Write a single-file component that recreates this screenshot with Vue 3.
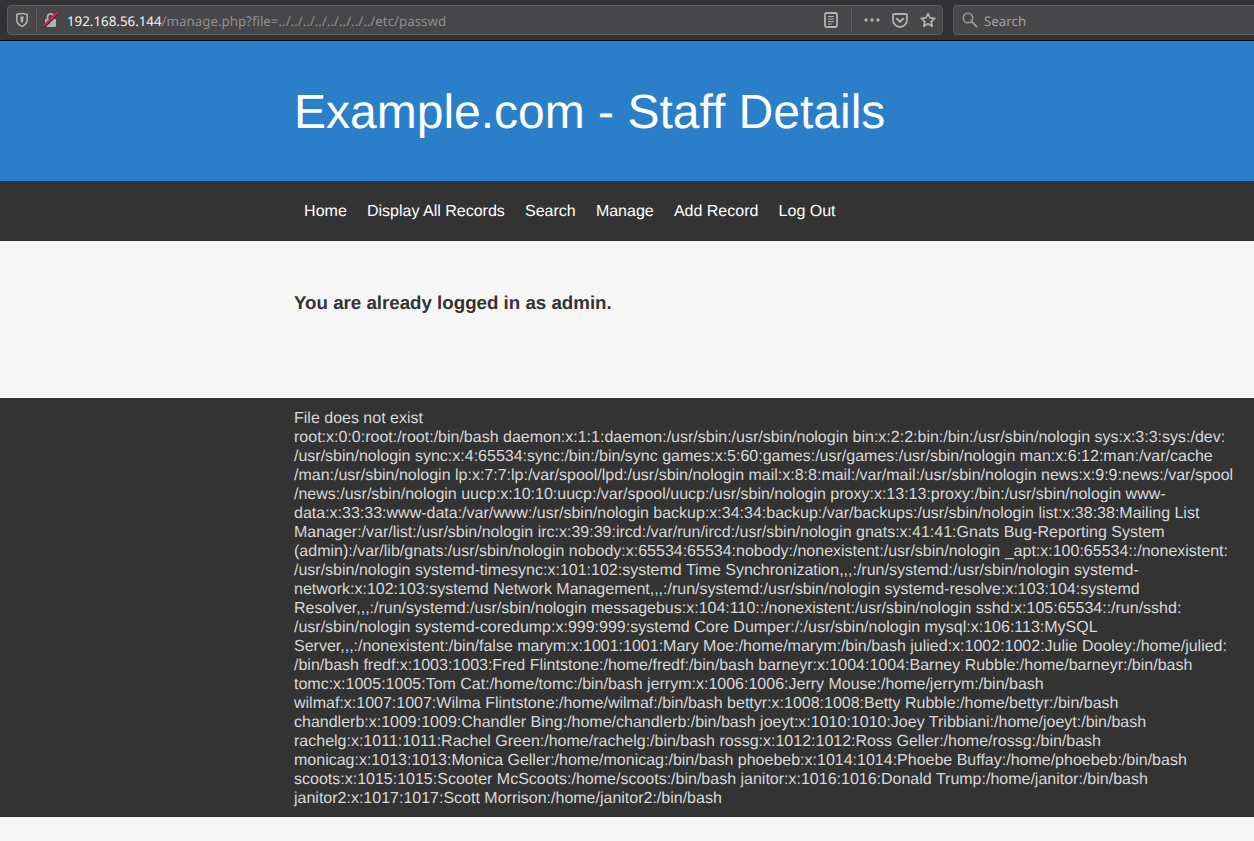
<script setup>
const navItems = ['Home', 'Display All Records', 'Search', 'Manage', 'Add Record', 'Log Out']
const lines = [
  'File does not exist',
  'root:x:0:0:root:/root:/bin/bash daemon:x:1:1:daemon:/usr/sbin:/usr/sbin/nologin bin:x:2:2:bin:/bin:/usr/sbin/nologin sys:x:3:3:sys:/dev:',
  '/usr/sbin/nologin sync:x:4:65534:sync:/bin:/bin/sync games:x:5:60:games:/usr/games:/usr/sbin/nologin man:x:6:12:man:/var/cache',
  '/man:/usr/sbin/nologin lp:x:7:7:lp:/var/spool/lpd:/usr/sbin/nologin mail:x:8:8:mail:/var/mail:/usr/sbin/nologin news:x:9:9:news:/var/spool',
  '/news:/usr/sbin/nologin uucp:x:10:10:uucp:/var/spool/uucp:/usr/sbin/nologin proxy:x:13:13:proxy:/bin:/usr/sbin/nologin www-',
  'data:x:33:33:www-data:/var/www:/usr/sbin/nologin backup:x:34:34:backup:/var/backups:/usr/sbin/nologin list:x:38:38:Mailing List',
  'Manager:/var/list:/usr/sbin/nologin irc:x:39:39:ircd:/var/run/ircd:/usr/sbin/nologin gnats:x:41:41:Gnats Bug-Reporting System',
  '(admin):/var/lib/gnats:/usr/sbin/nologin nobody:x:65534:65534:nobody:/nonexistent:/usr/sbin/nologin _apt:x:100:65534::/nonexistent:',
  '/usr/sbin/nologin systemd-timesync:x:101:102:systemd Time Synchronization,,,:/run/systemd:/usr/sbin/nologin systemd-',
  'network:x:102:103:systemd Network Management,,,:/run/systemd:/usr/sbin/nologin systemd-resolve:x:103:104:systemd',
  'Resolver,,,:/run/systemd:/usr/sbin/nologin messagebus:x:104:110::/nonexistent:/usr/sbin/nologin sshd:x:105:65534::/run/sshd:',
  '/usr/sbin/nologin systemd-coredump:x:999:999:systemd Core Dumper:/:/usr/sbin/nologin mysql:x:106:113:MySQL',
  'Server,,,:/nonexistent:/bin/false marym:x:1001:1001:Mary Moe:/home/marym:/bin/bash julied:x:1002:1002:Julie Dooley:/home/julied:',
  '/bin/bash fredf:x:1003:1003:Fred Flintstone:/home/fredf:/bin/bash barneyr:x:1004:1004:Barney Rubble:/home/barneyr:/bin/bash',
  'tomc:x:1005:1005:Tom Cat:/home/tomc:/bin/bash jerrym:x:1006:1006:Jerry Mouse:/home/jerrym:/bin/bash',
  'wilmaf:x:1007:1007:Wilma Flintstone:/home/wilmaf:/bin/bash bettyr:x:1008:1008:Betty Rubble:/home/bettyr:/bin/bash',
  'chandlerb:x:1009:1009:Chandler Bing:/home/chandlerb:/bin/bash joeyt:x:1010:1010:Joey Tribbiani:/home/joeyt:/bin/bash',
  'rachelg:x:1011:1011:Rachel Green:/home/rachelg:/bin/bash rossg:x:1012:1012:Ross Geller:/home/rossg:/bin/bash',
  'monicag:x:1013:1013:Monica Geller:/home/monicag:/bin/bash phoebeb:x:1014:1014:Phoebe Buffay:/home/phoebeb:/bin/bash',
  'scoots:x:1015:1015:Scooter McScoots:/home/scoots:/bin/bash janitor:x:1016:1016:Donald Trump:/home/janitor:/bin/bash',
  'janitor2:x:1017:1017:Scott Morrison:/home/janitor2:/bin/bash'
]
</script>

<template>
  <div class="page">
    <div class="toolbar">
      <div class="urlbar">
        <svg class="ic shield" width="14" height="16" viewBox="0 0 14 16">
          <path d="M7 1.5 C5.2 1.5 3.4 1.9 1.8 2.6 V7.5 C1.8 10.8 4.2 13.2 7 14.4 C9.8 13.2 12.2 10.8 12.2 7.5 V2.6 C10.6 1.9 8.8 1.5 7 1.5 Z" fill="none" stroke="#b1b1b3" stroke-width="1.6"/>
          <path d="M5.2 4.6 H8.8 L8 10.4 H6 Z" fill="#b1b1b3"/>
        </svg>
        <span class="sep sep-a"></span>
        <svg class="ic lock" width="16" height="16" viewBox="0 0 16 16">
          <path d="M4.5 7 V5 A3.2 3.2 0 0 1 10.7 4" fill="none" stroke="#b1b1b3" stroke-width="1.8"/>
          <rect x="2" y="7" width="11" height="8" rx="1" fill="#b1b1b3"/>
          <path d="M0.5 15 L14.5 1" stroke="#2a2a2e" stroke-width="3.2"/>
          <path d="M0.5 14 L14.5 0.5" stroke="#e22850" stroke-width="1.8"/>
        </svg>
        <span class="url"><span class="host">192.168.56.144</span>/manage.php?file=../../../../../../../../etc/passwd</span>
        <svg class="ic reader" width="14" height="16" viewBox="0 0 14 16">
          <rect x="1" y="1" width="12" height="14" rx="1.5" fill="none" stroke="#b1b1b3" stroke-width="1.8"/>
          <path d="M4 4.5 H10 M4 7 H10 M4 9.5 H10 M4 12 H8" stroke="#b1b1b3" stroke-width="1.1"/>
        </svg>
        <span class="sep sep-b"></span>
        <svg class="ic dots" width="16" height="4" viewBox="0 0 16 4">
          <circle cx="2" cy="2" r="1.7" fill="#b1b1b3"/>
          <circle cx="8" cy="2" r="1.7" fill="#b1b1b3"/>
          <circle cx="14" cy="2" r="1.7" fill="#b1b1b3"/>
        </svg>
        <svg class="ic pocket" width="16" height="15" viewBox="0 0 16 15">
          <path d="M2 1 H14 A1 1 0 0 1 15 2 V7 A7 7 0 0 1 1 7 V2 A1 1 0 0 1 2 1 Z" fill="none" stroke="#b1b1b3" stroke-width="1.8"/>
          <path d="M4.8 5.8 L8 8.8 L11.2 5.8" fill="none" stroke="#b1b1b3" stroke-width="1.9" stroke-linecap="round"/>
        </svg>
        <svg class="ic star" width="16" height="16" viewBox="0 0 16 16">
          <path d="M8 1.6 L10 5.9 L14.7 6.4 L11.2 9.6 L12.2 14.3 L8 11.9 L3.8 14.3 L4.8 9.6 L1.3 6.4 L6 5.9 Z" fill="none" stroke="#b1b1b3" stroke-width="1.8" stroke-linejoin="round"/>
        </svg>
      </div>
      <div class="searchbar">
        <svg class="ic" width="16" height="16" viewBox="0 0 16 16">
          <circle cx="6" cy="6" r="4.7" fill="none" stroke="#9a9a9c" stroke-width="1.6"/>
          <path d="M9.5 9.5 L15 15" stroke="#9a9a9c" stroke-width="2"/>
        </svg>
        <span class="search-text">Search</span>
      </div>
    </div>

    <header class="hero">
      <h1>Example.com - Staff Details</h1>
    </header>

    <nav class="menu">
      <a v-for="item in navItems" :key="item">{{ item }}</a>
    </nav>

    <main class="content">
      <p class="login">You are already logged in as admin.</p>
    </main>

    <footer class="dump">
      <div v-for="(line, i) in lines" :key="i" class="line">{{ line }}</div>
    </footer>
  </div>
</template>

<style>
html, body { margin: 0; background: #f6f6f6; overflow: hidden; }
</style>

<style scoped>
.page {
  width: 1254px;
  height: 841px;
  overflow: hidden;
  font-family: "Liberation Sans", Arial, sans-serif;
  font-size: 16px;
  background: #f6f6f6;
  text-rendering: geometricPrecision;
}
.toolbar {
  background: #323234;
  border-bottom: 1px solid #0c0c0d;
  display: flex;
  padding: 5px 0 0 7px;
  height: 35px;
  gap: 10px;
  font-family: "Noto Sans", sans-serif;
}
.urlbar, .searchbar {
  height: 30px;
  box-sizing: border-box;
  background: #474749;
  border: 1px solid #5a5a5c;
  border-radius: 4px;
  display: flex;
  align-items: center;
}
.urlbar { width: 936px; }
.searchbar {
  flex: 1;
  border-right: none;
  border-radius: 4px 0 0 4px;
  padding-left: 8px;
}
.ic { flex: none; display: block; }
.shield { margin-left: 7px; }
.sep { width: 1px; height: 22px; background: #5f5f61; flex: none; }
.sep-a { margin-left: 7px; }
.lock { margin-left: 6px; }
.url {
  margin-left: 8px;
  padding-top: 2px;
  font-size: 13.33px;
  color: #8f8f91;
  white-space: nowrap;
  flex: 1;
}
.host { color: #f0f0f0; }
.reader { margin-right: 13px; }
.sep-b { margin-right: 12px; }
.dots { margin-right: 12px; }
.pocket { margin-right: 12px; }
.star { margin-right: 6px; }
.search-text {
  margin-left: 6px;
  padding-top: 2px;
  font-size: 13.33px;
  color: #a0a0a2;
}
.hero {
  height: 140px;
  background: #2b7fc9;
  padding: 4px 0 0 294px;
  box-sizing: border-box;
  display: flex;
  align-items: center;
}
.hero h1 {
  margin: 0;
  font-size: 48px;
  font-weight: 400;
  color: #fff;
  line-height: 1;
}
.menu {
  height: 60px;
  box-sizing: border-box;
  background: #333;
  padding: 2px 0 0 294px;
  display: flex;
  align-items: center;
}
.menu a {
  padding: 0 10.1px;
  color: #fff;
}
.content {
  height: 157px;
  padding: 51px 0 0 294px;
  box-sizing: border-box;
  background: #f6f6f6;
}
.login {
  margin: 0;
  font-size: 18.72px;
  font-weight: 700;
  line-height: 22px;
  color: #333;
}
.dump {
  background: #333;
  color: #d8d8d8;
  padding: 11px 0 9px 294px;
}
.line {
  line-height: 19px;
  white-space: nowrap;
}
</style>
